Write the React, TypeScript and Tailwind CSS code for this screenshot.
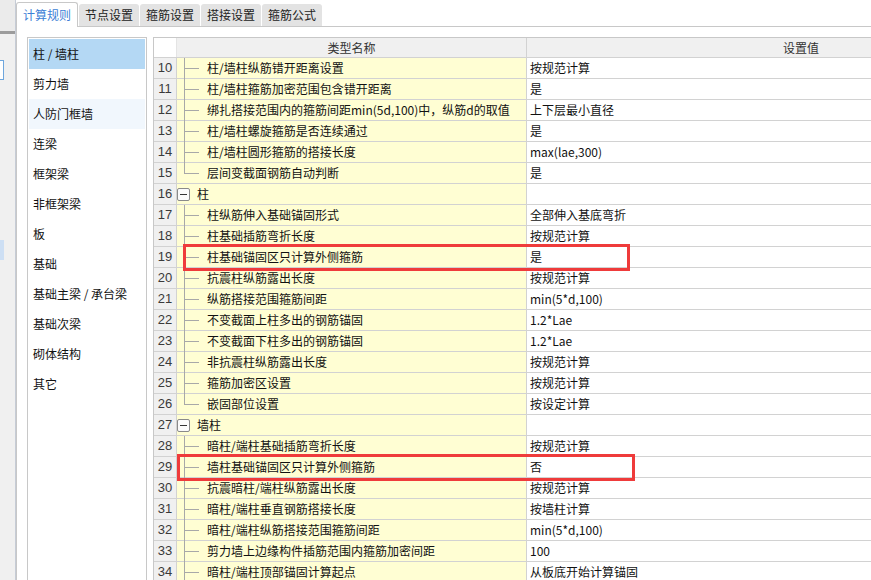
type Row =
  | { n: number; name: string; value: string; last?: boolean }
  | { n: number; group: string };

const rows: Row[] = [
  { n: 10, name: "柱/墙柱纵筋错开距离设置", value: "按规范计算" },
  { n: 11, name: "柱/墙柱箍筋加密范围包含错开距离", value: "是" },
  { n: 12, name: "绑扎搭接范围内的箍筋间距min(5d,100)中，纵筋d的取值", value: "上下层最小直径" },
  { n: 13, name: "柱/墙柱螺旋箍筋是否连续通过", value: "是" },
  { n: 14, name: "柱/墙柱圆形箍筋的搭接长度", value: "max(lae,300)" },
  { n: 15, name: "层间变截面钢筋自动判断", value: "是", last: true },
  { n: 16, group: "柱" },
  { n: 17, name: "柱纵筋伸入基础锚固形式", value: "全部伸入基底弯折" },
  { n: 18, name: "柱基础插筋弯折长度", value: "按规范计算" },
  { n: 19, name: "柱基础锚固区只计算外侧箍筋", value: "是" },
  { n: 20, name: "抗震柱纵筋露出长度", value: "按规范计算" },
  { n: 21, name: "纵筋搭接范围箍筋间距", value: "min(5*d,100)" },
  { n: 22, name: "不变截面上柱多出的钢筋锚固", value: "1.2*Lae" },
  { n: 23, name: "不变截面下柱多出的钢筋锚固", value: "1.2*Lae" },
  { n: 24, name: "非抗震柱纵筋露出长度", value: "按规范计算" },
  { n: 25, name: "箍筋加密区设置", value: "按规范计算" },
  { n: 26, name: "嵌固部位设置", value: "按设定计算", last: true },
  { n: 27, group: "墙柱" },
  { n: 28, name: "暗柱/端柱基础插筋弯折长度", value: "按规范计算" },
  { n: 29, name: "墙柱基础锚固区只计算外侧箍筋", value: "否" },
  { n: 30, name: "抗震暗柱/端柱纵筋露出长度", value: "按规范计算" },
  { n: 31, name: "暗柱/端柱垂直钢筋搭接长度", value: "按墙柱计算" },
  { n: 32, name: "暗柱/端柱纵筋搭接范围箍筋间距", value: "min(5*d,100)" },
  { n: 33, name: "剪力墙上边缘构件插筋范围内箍筋加密间距", value: "100" },
  { n: 34, name: "暗柱/端柱顶部锚固计算起点", value: "从板底开始计算锚固" },
];

const sideItems = [
  "柱 / 墙柱",
  "剪力墙",
  "人防门框墙",
  "连梁",
  "框架梁",
  "非框架梁",
  "板",
  "基础",
  "基础主梁 / 承台梁",
  "基础次梁",
  "砌体结构",
  "其它",
];

const tabs = ["计算规则", "节点设置", "箍筋设置", "搭接设置", "箍筋公式"];

function GridRow({ row }: { row: Row }) {
  return (
    <div className="flex h-[21px] border-b border-[#d2d2d2]">
      <div className="w-[23px] shrink-0 bg-[#f0f0f0] border-r border-[#d2d2d2] text-center text-[13px] leading-[20px] text-[#3a3a3a] font-['Liberation_Sans',sans-serif]">
        {row.n}
      </div>
      <div className="relative w-[350px] shrink-0 bg-[#fffed3] border-r border-[#d2d2d2] text-[12px] leading-[20px] text-[#111]">
        {"group" in row ? (
          <>
            <span className="absolute left-0 top-[4px] w-[13px] h-[13px] rounded-[2px] border border-[#8a8a8a] bg-[#fafafa] flex items-center justify-center">
              <span className="w-[7px] h-px bg-[#333]" />
            </span>
            <span className="pl-[20px]">{row.group}</span>
          </>
        ) : (
          <>
            <span
              className={
                row.last
                  ? "absolute left-[7px] top-0 w-px h-[10px] bg-[#a8a8a8]"
                  : "absolute left-[7px] top-0 w-px h-[21px] bg-[#a8a8a8]"
              }
            />
            <span className="absolute left-[7px] top-[10px] w-[15px] h-px bg-[#a8a8a8]" />
            <span className="pl-[30px] whitespace-nowrap">{row.name}</span>
          </>
        )}
      </div>
      <div className="w-[548px] shrink-0 bg-white pl-[3px] text-[12px] leading-[20px] text-[#111] whitespace-nowrap">
        {"group" in row ? "" : row.value}
      </div>
    </div>
  );
}

export default function App() {
  return (
    <div className="relative w-[871px] h-[580px] overflow-hidden flex bg-white font-['Noto_Sans_CJK_SC','Noto_Sans',sans-serif]">
      {/* left edge of the parent window */}
      <div className="w-[16px] shrink-0 flex flex-col bg-[#f0f0f0] border-r border-[#c6ccd6]">
        <div className="h-[31px] bg-[#ebebeb]" />
        <div className="h-[3px] bg-[#9c9c9c]" />
        <div className="h-[26px]" />
        <div className="h-[20px] w-[4px] bg-white border border-l-0 border-[#6ea6dd]" />
        <div className="h-[160px]" />
        <div className="h-[20px] w-[4px] bg-[#cddff4]" />
      </div>

      <div className="flex-1 flex flex-col min-w-0">
        {/* tabs */}
        <div className="flex items-end gap-px h-[27px] border-b border-[#c8c8c8] pr-2">
          {tabs.map((t, i) =>
            i === 0 ? (
              <div
                key={t}
                className="w-[62px] h-[25px] -mb-px bg-white border border-b-0 border-[#c8c8c8] rounded-t-[3px] text-center text-[12px] leading-[24px] text-[#3d7fd6]"
              >
                {t}
              </div>
            ) : (
              <div
                key={t}
                className="w-[60px] h-[22px] bg-[#e3e3e3] rounded-t-[3px] text-center text-[12px] leading-[22px] text-[#222]"
              >
                {t}
              </div>
            )
          )}
        </div>

        {/* body */}
        <div className="flex-1 flex gap-[6px] pt-[10px] pl-[10px] border-l border-[#c8c8c8] min-h-0">
          <div className="w-[120px] shrink-0 border border-b-0 border-[#c8c8c8] p-px">
            {sideItems.map((s, i) => (
              <div
                key={s}
                className={
                  i === 0
                    ? "h-[30px] pl-[4px] text-[12px] leading-[30px] text-[#111] bg-[#b4d8f4]"
                    : i === 2
                    ? "h-[30px] pl-[4px] text-[12px] leading-[30px] text-[#111] bg-[#f1f7fd]"
                    : "h-[30px] pl-[4px] text-[12px] leading-[30px] text-[#111]"
                }
              >
                {s}
              </div>
            ))}
          </div>

          <div className="flex-1 min-w-0 overflow-hidden border-l border-t border-[#c8c8c8]">
            <div className="flex h-[20px] border-b border-[#d2d2d2] text-[12px] leading-[19px] text-[#333]">
              <div className="w-[23px] shrink-0 bg-white border-r border-[#e4e4e4]" />
              <div className="w-[350px] shrink-0 bg-[#f0f0f0] border-r border-[#d2d2d2] text-center">
                类型名称
              </div>
              <div className="w-[548px] shrink-0 bg-[#f0f0f0] text-center">设置值</div>
            </div>
            {rows.map((r) => (
              <GridRow key={r.n} row={r} />
            ))}
          </div>
        </div>
      </div>

      {/* red highlight boxes */}
      <div className="absolute left-[183px] top-[244px] w-[447px] h-[27px] border-[3px] border-[#ef3b3b]" />
      <div className="absolute left-[177px] top-[454px] w-[458px] h-[27px] border-[3px] border-[#ef3b3b]" />
    </div>
  );
}
